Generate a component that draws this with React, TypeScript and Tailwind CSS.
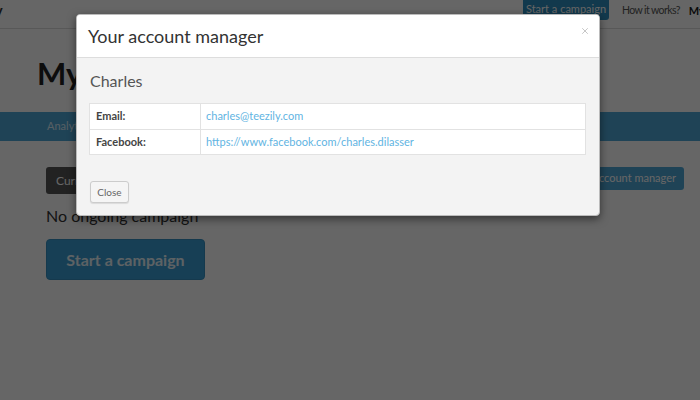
import { X } from "lucide-react";

export default function App() {
  return (
    <div className="relative w-[700px] h-[400px] overflow-hidden bg-white font-['Lato','Open_Sans',sans-serif] text-[#333]">
      {/* page behind the modal */}
      <header className="flex items-start h-[29px] border-b border-[#ddd] whitespace-nowrap">
        <span className="text-[15px] font-bold leading-[20px] -ml-[43px] w-[52px] shrink-0">Teezily</span>
        <div className="ml-[514px] flex items-start shrink-0">
          <button className="h-[22px] -mt-[2px] w-[86px] rounded-b-[3px] bg-[#2f8fc0] text-white text-[11px]">
            Start a campaign
          </button>
          <a className="ml-[13px] mt-[3px] text-[10.5px] tracking-[-0.6px] text-[#555]">How it works?</a>
          <span className="ml-[9px] mt-[3px] text-[11px] font-bold text-[#222]">My account</span>
        </div>
      </header>
      <h1 className="ml-[37px] mt-[24px] text-[31px] font-bold leading-[40px] text-[#222]">My campaigns</h1>
      <nav className="mt-[19px] h-[29px] bg-[#4fa8d8] flex items-center pl-[47px]">
        <span className="text-[11px] text-[#d8edf8]">Analytics</span>
      </nav>
      <div className="px-[46px] pt-[26px]">
        <div className="flex items-start justify-between">
          <button className="h-[27px] px-[10px] rounded-[3px] bg-[#555] text-white text-[12px]">Current campaigns</button>
          <button className="h-[23px] -mr-[30px] px-[8px] rounded-[3px] bg-[#4fa8d8] text-white text-[11px]">
            Your account manager
          </button>
        </div>
        <p className="mt-[10px] text-[16px] leading-[24px] text-[#333]">No ongoing campaign</p>
        <button className="mt-[11px] h-[41px] w-[159px] rounded-[4px] bg-[#3a9fd5] text-[#e8f4fb] text-[16px] font-bold border border-[#3590c0]">
          Start a campaign
        </button>
      </div>

      {/* backdrop */}
      <div className="absolute inset-0 bg-black/60" />

      {/* modal */}
      <div className="absolute left-[76px] top-[14px] w-[524px] rounded-[4px] border border-[#bbb] bg-[#f3f3f3] shadow-[0_3px_9px_rgba(0,0,0,0.5)] overflow-hidden">
        <div className="flex items-center justify-between h-[43px] pl-[11px] pr-[9px] bg-white border-b border-[#ddd]">
          <h2 className="text-[18px] text-[#333] leading-[24px]">Your account manager</h2>
          <X className="w-[10px] h-[10px] text-[#bbb] -mt-[10px]" strokeWidth={2} />
        </div>
        <div className="px-[12px] pt-[13px] pb-[12px]">
          <h3 className="pl-[1px] text-[16px] text-[#555] leading-[20px]">Charles</h3>
          <table className="mt-[12px] w-[497px] bg-white border border-[#e2e2e2] text-[11px]">
            <tbody>
              <tr className="h-[26px] border-b border-[#e2e2e2]">
                <td className="w-[111px] pl-[6px] font-bold text-[#444] border-r border-[#e2e2e2]">Email:</td>
                <td className="pl-[5px] text-[#5fb4e2]">charles@teezily.com</td>
              </tr>
              <tr className="h-[25px]">
                <td className="pl-[6px] font-bold text-[#444] border-r border-[#e2e2e2]">Facebook:</td>
                <td className="pl-[5px] text-[#5fb4e2]">https://www.facebook.com/charles.dilasser</td>
              </tr>
            </tbody>
          </table>
          <button className="ml-[1px] mt-[26px] h-[22px] w-[39px] rounded-[3px] border border-[#ccc] bg-[#f5f5f5] text-[10px] text-[#666] shadow-[0_1px_1px_rgba(0,0,0,0.1)]">
            Close
          </button>
        </div>
      </div>
    </div>
  );
}
